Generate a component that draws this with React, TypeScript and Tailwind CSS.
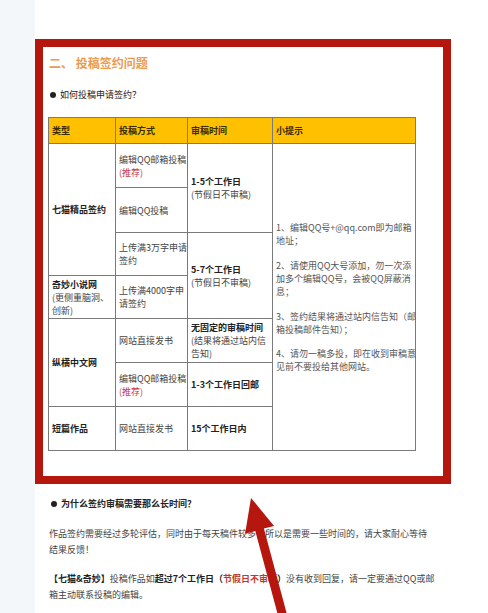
import React from "react";

const cell = "border border-[#7a7a7a] px-[3px] align-middle whitespace-nowrap";

function Bullet({ children, bold }: { children: React.ReactNode; bold?: boolean }) {
  return (
    <p
      className={`flex items-center text-[9px] leading-[14px] text-[#222] ${
        bold ? "font-bold" : ""
      }`}
    >
      <span className="ml-[2px] mr-[4px] inline-block h-[6px] w-[6px] rounded-full bg-[#222]" />
      {children}
    </p>
  );
}

function Rec() {
  return <span className="text-[#c8384a]">(推荐)</span>;
}

export default function App() {
  return (
    <div className="relative flex h-[613px] w-[488px] overflow-hidden bg-white font-['Noto_Sans_CJK_SC',sans-serif]">
      <div className="w-[35px] shrink-0 bg-[#f4f7f9]" />
      <div className="flex-1 pt-[39px]">
        <section className="w-[416px] border-[8px] border-[#b5170f] pb-[25px] pl-[5px] pt-[8px]">
          <h2 className="ml-px text-[12px] font-bold leading-[16px] text-[#ec9a4c]">
            二、 投稿签约问题
          </h2>
          <div className="mt-[17px]">
            <Bullet>如何投稿申请签约？</Bullet>
          </div>
          <table className="mt-[15px] w-[367px] table-fixed border-collapse text-[9px] leading-[13px] text-[#444]">
            <colgroup>
              <col className="w-[67px]" />
              <col className="w-[72px]" />
              <col className="w-[85px]" />
              <col className="w-[143px]" />
            </colgroup>
            <thead>
              <tr className="h-[26px] bg-[#ffc000] text-left font-semibold text-[#3b2c00]">
                <th className={cell}>类型</th>
                <th className={cell}>投稿方式</th>
                <th className={cell}>审稿时间</th>
                <th className={cell}>小提示</th>
              </tr>
            </thead>
            <tbody>
              <tr className="h-[44px]">
                <td rowSpan={3} className={`${cell} font-bold text-[#222]`}>
                  七猫精品签约
                </td>
                <td className={cell}>
                  编辑QQ邮箱投稿
                  <br />
                  <Rec />
                </td>
                <td rowSpan={2} className={cell}>
                  <span className="font-bold text-[#222]">1-5个工作日</span>
                  <br />
                  (节假日不审稿)
                </td>
                <td rowSpan={7} className={`${cell} text-[#555]`}>
                  <p>
                    1、编辑QQ号+@qq.com即为邮箱
                    <br />
                    地址；
                  </p>
                  <p className="mt-[12px]">
                    2、请使用QQ大号添加，勿一次添
                    <br />
                    加多个编辑QQ号，会被QQ屏蔽消
                    <br />
                    息；
                  </p>
                  <p className="mt-[12px]">
                    3、签约结果将通过站内信告知（邮
                    <br />
                    箱投稿邮件告知）；
                  </p>
                  <p className="mt-[11px]">
                    4、请勿一稿多投，即在收到审稿意
                    <br />
                    见前不要投给其他网站。
                  </p>
                </td>
              </tr>
              <tr className="h-[45px]">
                <td className={cell}>编辑QQ投稿</td>
              </tr>
              <tr className="h-[43px]">
                <td className={cell}>
                  上传满3万字申请
                  <br />
                  签约
                </td>
                <td rowSpan={2} className={cell}>
                  <span className="font-bold text-[#222]">5-7个工作日</span>
                  <br />
                  (节假日不审稿)
                </td>
              </tr>
              <tr className="h-[43px]">
                <td className={cell}>
                  <span className="font-bold text-[#222]">奇妙小说网</span>
                  <br />
                  (更侧重脑洞、
                  <br />
                  创新)
                </td>
                <td className={cell}>
                  上传满4000字申
                  <br />
                  请签约
                </td>
              </tr>
              <tr className="h-[44px]">
                <td rowSpan={2} className={`${cell} font-bold text-[#222]`}>
                  纵横中文网
                </td>
                <td className={cell}>网站直接发书</td>
                <td className={cell}>
                  <span className="font-bold text-[#222]">无固定的审稿时间</span>
                  <br />
                  (结果将通过站内信
                  <br />
                  告知)
                </td>
              </tr>
              <tr className="h-[44px]">
                <td className={cell}>
                  编辑QQ邮箱投稿
                  <br />
                  <Rec />
                </td>
                <td className={`${cell} font-bold text-[#222]`}>1-3个工作日回邮</td>
              </tr>
              <tr className="h-[44px]">
                <td className={`${cell} font-bold text-[#222]`}>短篇作品</td>
                <td className={cell}>网站直接发书</td>
                <td className={`${cell} font-bold text-[#222]`}>15个工作日内</td>
              </tr>
            </tbody>
          </table>
        </section>

        <div className="pl-[14px] text-[9px] leading-[16px] text-[#444]">
          <div className="mt-[13px]">
            <Bullet bold>为什么签约审稿需要那么长时间？</Bullet>
          </div>
          <p className="mt-[15px] whitespace-nowrap">
            作品签约需要经过多轮评估，同时由于每天稿件较多，所以是需要一些时间的，请大家耐心等待
            <br />
            结果反馈！
          </p>
          <p className="mt-[13px] whitespace-nowrap">
            <span className="font-bold text-[#222]">【七猫&amp;奇妙】</span>投稿作品如
            <span className="font-bold text-[#222]">超过7个工作日（</span>
            <span className="font-bold text-[#c0392b]">节假日不审稿</span>
            <span className="font-bold text-[#222]">）</span>没有收到回复，请一定要通过QQ或邮
            <br />
            箱主动联系投稿的编辑。
          </p>
        </div>
      </div>

      <svg
        className="pointer-events-none absolute left-0 top-0"
        width="488"
        height="613"
        viewBox="0 0 488 613"
      >
        <polygon
          points="251,498 274.1,525.9 263.9,528.6 289.5,623.8 280.9,626.2 255.3,531 245.1,533.7"
          fill="#b5170f"
        />
      </svg>
    </div>
  );
}
